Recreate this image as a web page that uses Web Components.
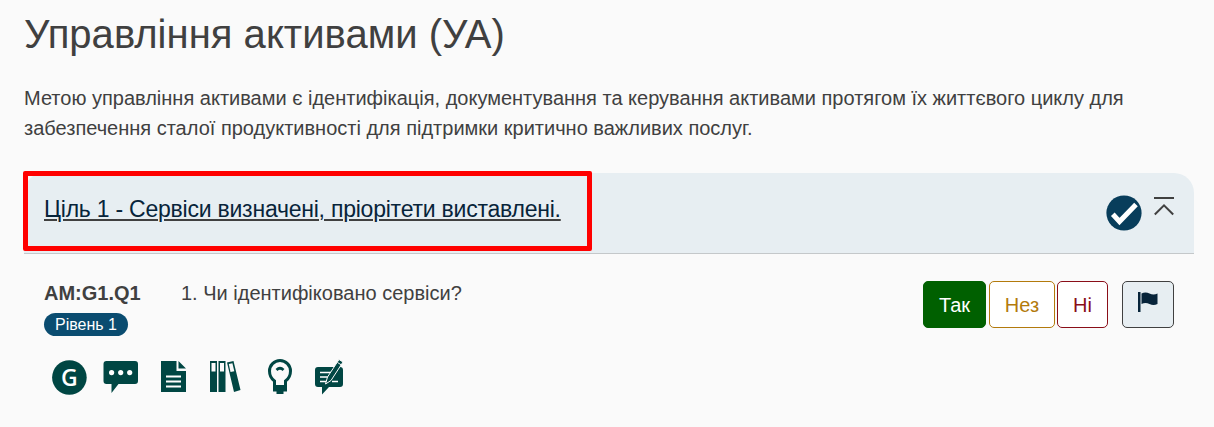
<!DOCTYPE html>
<html lang="uk">
<head>
<meta charset="utf-8">
<title>Управління активами</title>
<style>
body{margin:0;background:#fafafa;color:#404040;font-family:"Liberation Sans",Arial,sans-serif;font-size:20px;line-height:30px}
</style>
</head>
<body>
<assessment-page></assessment-page>
<script>
const define = (name, html) => customElements.define(name, class extends HTMLElement {
  constructor() {
    super();
    const t = document.createElement('template');
    t.innerHTML = html;
    this.attachShadow({mode: 'open'}).append(t.content.cloneNode(true));
  }
});

define('page-intro', `
<style>
:host{display:block}
h1{margin:0;font-size:40px;line-height:48px;font-weight:400;letter-spacing:.03px;white-space:nowrap}
p{margin:25px 0 0;white-space:nowrap}
</style>
<h1><slot name="title"></slot></h1>
<p><slot></slot></p>`);

define('goal-header', `
<style>
:host{display:flex;box-sizing:border-box;height:81px;background:#e7eef2;border-bottom:1px solid #c4c8ca;border-radius:20px 20px 0 0;position:relative}
.title{margin:21px 0 0 20px;font-size:23px;letter-spacing:-.23px;line-height:30px;color:#07243a;text-decoration:underline;text-decoration-color:#404040;text-decoration-thickness:2px;text-underline-offset:2px;white-space:nowrap}
.state{display:flex;gap:12px;margin-left:auto;padding:22px 20px 0 0}
svg{display:block}
.mark{position:absolute;left:-1px;top:-2px;width:569px;height:80px;box-sizing:border-box;border:5px solid #f00;border-radius:2px}
</style>
<div class="title"><slot></slot></div>
<div class="state">
<svg width="36" height="36" viewBox="0 0 36 36"><circle cx="18" cy="18" r="17.6" fill="#083d5b"/><path d="M6.800 19.300 13.500 26.500 30 9.500" fill="none" stroke="#fff" stroke-width="5"/></svg>
<svg width="20" height="24" viewBox="0 0 20 24"><path d="M0 3H20M.8 19.500 10 10.300 19.200 19.500" fill="none" stroke="#404040" stroke-width="2"/></svg>
</div>
<div class="mark"></div>`);

define('level-badge', `
<style>:host{display:block;box-sizing:border-box;width:84px;height:23px;border-radius:12px;background:#0a4c70;color:#fff;font-size:16px;line-height:23px;text-align:center;white-space:nowrap}</style>
<slot></slot>`);

define('answer-button', `
<style>
:host{display:block}
button{box-sizing:border-box;display:block;width:var(--w);height:47px;padding:1px 0 0;border:1px solid var(--c);border-radius:5px;background:var(--bg,#fff);color:var(--fg,var(--c));font:inherit;line-height:45px;text-align:center}
</style>
<button><slot></slot></button>`);

define('tool-icons', `
<style>
:host{display:flex;height:36px;color:#004643}
svg{display:block;fill:currentColor;overflow:visible}
text{font:600 23px "Open Sans",sans-serif;fill:#fff}
</style>
<svg style="margin-left:8px" width="35" height="36"><circle cx="17.400" cy="18.500" r="17.300"/><text x="17.400" y="27" text-anchor="middle">G</text></svg>
<svg style="margin-left:16px" width="36" height="36"><path d="M3.500 2H32Q35 2 35 5V22Q35 25 32 25H15.500L8.500 34V25H3.500Q.5 25 .5 22V5Q.5 2 3.500 2Z"/><g fill="#fff"><circle cx="8.600" cy="13.600" r="2.600"/><circle cx="17.700" cy="13.600" r="2.600"/><circle cx="26.700" cy="13.600" r="2.600"/></g></svg>
<svg style="margin-left:22px" width="25" height="36"><path d="M0 2H15.500V12H25V33H0ZM17.500 2 25 9.500H17.500Z"/><path d="M5 17.500H20M5 22.500H20M5 27.500H20" stroke="#fff" stroke-width="2"/></svg>
<svg style="margin-left:24px" width="31" height="36"><path fill-rule="evenodd" d="M0 2H7V33H0ZM1.500 4V12.500H5.500V4ZM8.500 2H15.500V33H8.500ZM10 4V12.500H14V4Z"/><path fill-rule="evenodd" d="M17 3.500 23.500 2 30.500 31 24 33ZM18.800 5 20.500 13 24.300 12.200 22.400 4.200Z"/></svg>
<svg style="margin-left:27px" width="24" height="36"><path d="M6.500 27V22Q1.500 18.500 1.500 12A10.500 10.500 0 0 1 22.500 12Q22.500 18.500 17.500 22V27" fill="none" stroke="currentColor" stroke-width="3"/><path d="M5 26H19V32.500H15.500V35H8.500V32.500H5Z"/><path d="M8.500 11Q12 7.500 15.500 11" fill="none" stroke="currentColor" stroke-width="2.700"/></svg>
<svg style="margin-left:23px" width="30" height="36"><path d="M3 8H25Q28 8 28 11V25Q28 28 25 28H14L7 35.500V28H3Q0 28 0 25V11Q0 8 3 8Z"/><path d="M5 13.500H19M5 18H15M5 22.500H12M17 22.500H23" stroke="#fff" stroke-width="1.600"/><path d="M10.500 25 12.500 18 24 .5 28 3 16 21.500Z" stroke="#fafafa" stroke-width="1"/><path d="M22.500 3.500 26.500 6" stroke="#fafafa"/></svg>`);

define('question-row', `
<style>
:host{display:grid;grid-template-columns:137px 1fr auto;padding:25px 20px 0}
.code{font-weight:700;line-height:28px;white-space:nowrap}
level-badge{margin-top:6px}
.q{line-height:28px;white-space:nowrap}
.answers{display:flex;gap:3px;margin-top:2px}
tool-icons{grid-column:1/-1;margin-top:23px}
svg{display:block;margin:-7px auto 0}
</style>
<div><div class="code"><slot name="code"></slot></div><level-badge><slot name="level"></slot></level-badge></div>
<div class="q"><slot></slot></div>
<div class="answers">
<answer-button style="--w:63px;--c:#006000;--bg:#006000;--fg:#fff">Так</answer-button>
<answer-button style="--w:66px;--c:#b37a0c">Нез</answer-button>
<answer-button style="--w:51px;--c:#8a0e18;margin-left:-1px">Ні</answer-button>
<answer-button style="--w:52px;--c:#404040;--bg:#e7eef2;margin-left:11px"><svg width="20" height="20"><path d="M0 0H2.500V20H0ZM3.500 1.500Q7.500-.5 11.500 1.500T19.500 1.500V12Q15.500 14 11.500 12T3.500 12Z" fill="#07243a"/></svg></answer-button>
</div>
<tool-icons></tool-icons>`);

define('assessment-page', `
<style>
:host{display:block;padding:10px 20px 0 24px;height:417px;overflow:hidden}
goal-header{margin-top:30px}
</style>
<page-intro><span slot="title">Управління активами (УА)</span><span>Метою управління активами є ідентифікація, документування та керування активами протягом їх життєвого циклу для<br>забезпечення сталої продуктивності для підтримки критично важливих послуг.</span></page-intro>
<goal-header>Ціль 1 - Сервіси визначені, пріорітети виставлені.</goal-header>
<question-row><span slot="code">AM:G1.Q1</span><span slot="level">Рівень 1</span>1. Чи ідентифіковано сервіси?</question-row>`);
</script>
</body>
</html>
